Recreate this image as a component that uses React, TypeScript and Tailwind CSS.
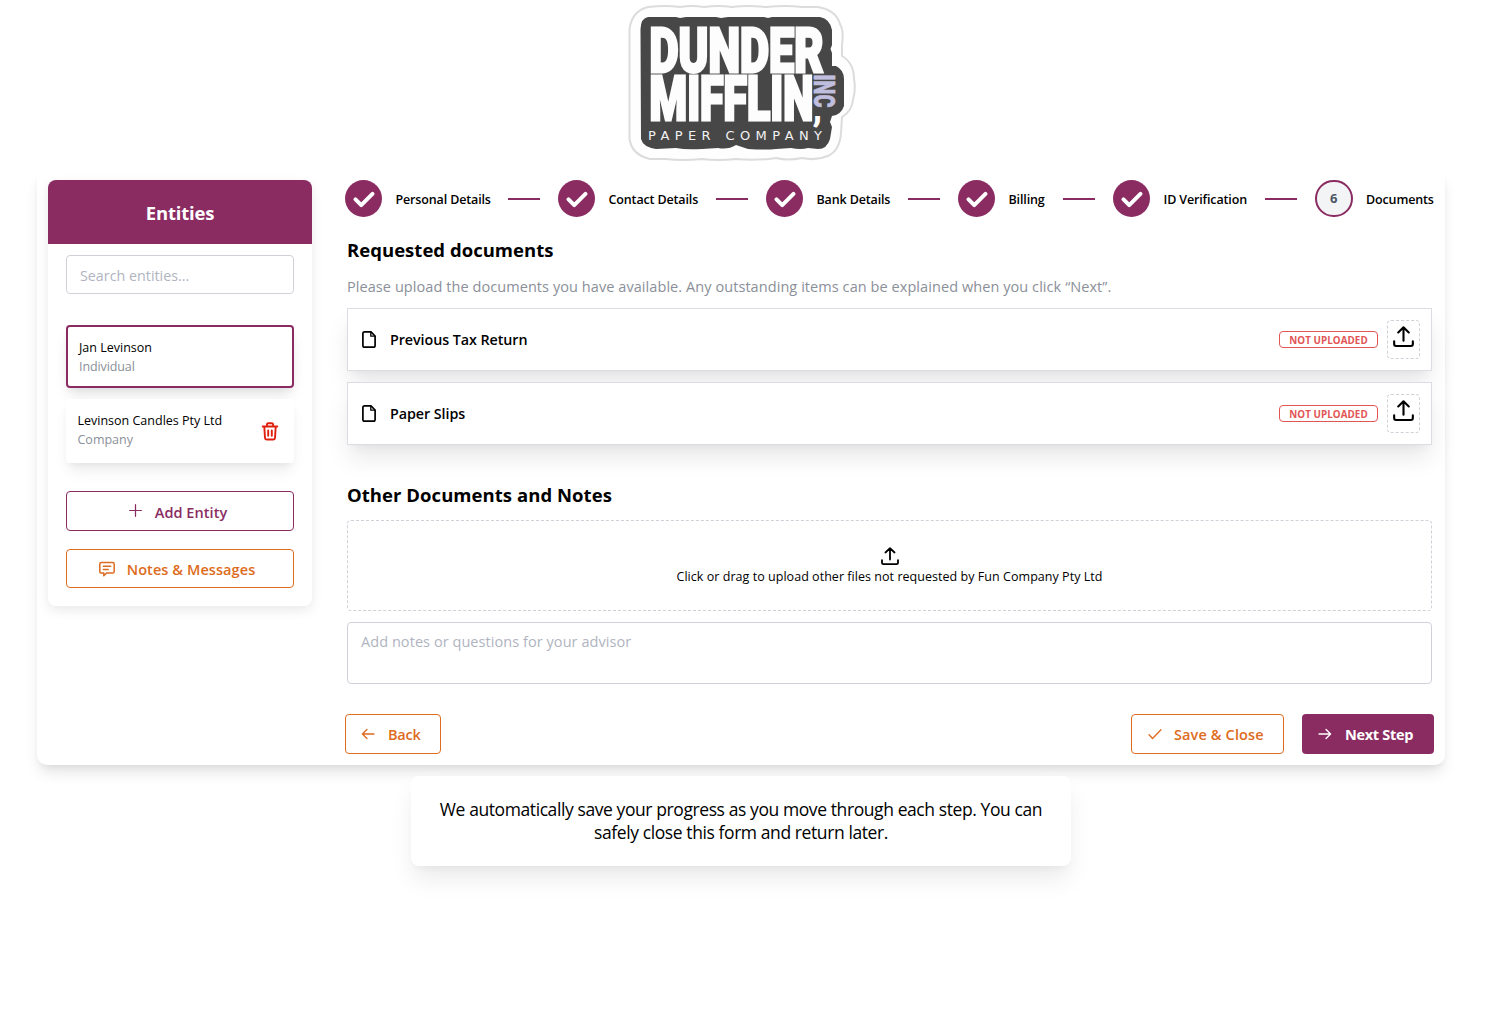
import type { ReactNode } from "react";

function Logo() {
  return (
    <svg width="230" height="158" viewBox="0 0 230 158" className="block overflow-visible" role="img" aria-label="Dunder Mifflin, Inc Paper Company">
      <path
        d="M22 2 Q40 0 54 2 Q66 0 78 2 Q92 0 106 2 Q120 0 140 2 Q160 0 176 2 L192 2 Q210 5 214 19 Q218 26 216 40 L216 51 Q228 58 228 74 Q230 84 227 95 Q226 106 216 112 L215 128 Q214 145 202 151 Q190 156 176 153 Q162 156 150 153 Q130 156 110 154 Q92 156 76 154 Q56 156 40 154 L24 154 Q6 150 3.500 134 L3.500 24 Q6 6 22 2 Z"
        fill="#fefefe"
        stroke="#dcdcdc"
        strokeWidth="2"
      />
      <path
        d="M22 12 L50 12 L54 13 L60 12 L90 12 L95 13 L102 12 L138 12 L142 13 L146 12 L194 12 Q204 14 206 25 L206 40 L204.500 44 L206 48 L206 61 L210 61 Q218 65 218 74 L218 101 Q215 110 206 111 L204 117 L206 122 L204 134 Q201 144 192 144 L182 143 Q175 145 165 143 L150 144 Q140 145 122 144 L110 140 Q102 145 92 143 L76 144 Q60 145 50 143 L30 144 Q17 142 15 134 L14.500 24 Q15 13 22 12 Z"
        fill="#474747"
      />
      <g fill="#fdfdfd" stroke="#fdfdfd" strokeWidth="3" fontFamily="Roboto" fontWeight="900" fontSize="62">
        <text x="23.500" y="66.500" textLength="174" lengthAdjust="spacingAndGlyphs">DUNDER</text>
        <text x="23.500" y="115" textLength="164" lengthAdjust="spacingAndGlyphs">MIFFLIN</text>
      </g>
      <text x="186.500" y="116" fontSize="36" fontFamily="Roboto" fontWeight="900" fill="#fdfdfd">,</text>
      <text transform="translate(187.500 69.500) rotate(90)" fontSize="30" fontFamily="Roboto" fontWeight="900" fill="#c0bedf" stroke="#c0bedf" strokeWidth="0.700" textLength="33" lengthAdjust="spacingAndGlyphs">INC</text>
      <text x="22" y="134.500" fontSize="13" fontFamily="DejaVu Sans" fill="#f2f2f2" textLength="174" lengthAdjust="spacing">PAPER COMPANY</text>
    </svg>
  );
}

function Stroke({ size, width = 1.5, children, className = "" }: { size: number; width?: number; children: ReactNode; className?: string }) {
  return (
    <svg width={size} height={size} viewBox="0 0 20 20" fill="none" stroke="currentColor" strokeWidth={width} strokeLinecap="round" strokeLinejoin="round" className={className} aria-hidden="true">
      {children}
    </svg>
  );
}

function UploadIcon({ size }: { size: number }) {
  return (
    <Stroke size={size} width={2}>
      <path d="M10 14V1.400M5 6.100L10 1.300l5 4.800M1.100 14.500v2.700Q1.100 19 2.900 19h14.200Q18.900 19 18.900 17.200v-2.700" />
    </Stroke>
  );
}

function FileIcon() {
  return (
    <svg width="14" height="17" viewBox="0 0 14 17" fill="none" stroke="currentColor" strokeWidth="1.700" strokeLinejoin="round" aria-hidden="true">
      <path d="M9 .9H2.600Q.9 .9 .9 2.600v11.800q0 1.700 1.700 1.700h8.800q1.700 0 1.700-1.700V5L9 .9Z" />
      <path d="M8.800 1v4.200H13" strokeWidth="1.300" />
    </svg>
  );
}

function TrashIcon() {
  return (
    <svg width="18" height="19" viewBox="0 0 18 19" fill="none" stroke="currentColor" strokeWidth="1.900" strokeLinecap="round" strokeLinejoin="round" aria-hidden="true">
      <path d="M1.700 4.500h14.600M5.900 4.300V2.600Q5.900 1.300 7.200 1.300h3.600q1.300 0 1.300 1.300v1.700M3.300 4.800l.7 11.200q.1 1.500 1.600 1.500h6.800q1.500 0 1.600-1.500l.7-11.200M7.200 8.500v5.200M10.800 8.500v5.200" />
    </svg>
  );
}

const steps = [
  { label: "Personal Details", width: "w-[95.5px]" },
  { label: "Contact Details", width: "w-[90.5px]" },
  { label: "Bank Details", width: "w-[74.5px]" },
  { label: "Billing", width: "w-[37.5px]" },
  { label: "ID Verification", width: "w-[84.5px]" },
  { label: "Documents", width: "w-[68.5px]" },
];

function Stepper() {
  return (
    <ol className="flex h-[37px] items-center">
      {steps.map((step, i) => {
        const last = i === steps.length - 1;
        return (
          <li key={step.label} className="flex shrink-0 items-center">
            {last ? (
              <span className="flex size-[37.5px] items-center justify-center rounded-full border-2 border-[#8a2c62] bg-[#f3f4f6] text-[13px] font-bold text-[#4b5563]">6</span>
            ) : (
              <span className="flex size-[37px] items-center justify-center rounded-full bg-[#8a2c62] text-white">
                <Stroke size={22} width={3.6}>
                  <path d="M2.300 10.300l5.200 5.200L17.700 5.300" />
                </Stroke>
              </span>
            )}
            <span className={`ml-[13.5px] whitespace-nowrap pt-0.5 text-[12.5px] leading-5 font-semibold tracking-[-0.14px] ${step.width}`}>{step.label}</span>
            {!last && <span className="mr-[18px] ml-[17px] h-0.5 w-8 bg-[#8a2c62]" />}
          </li>
        );
      })}
    </ol>
  );
}

function Sidebar() {
  return (
    <aside className="h-[426px] w-[264px] shrink-0 overflow-hidden rounded-lg bg-white shadow-[0_4px_12px_rgba(0,0,0,0.09)]">
      <div className="flex h-16 items-center justify-center bg-[#8a2c62] pt-0.5 text-[18.5px] font-bold tracking-[-0.2px] text-white">Entities</div>
      <div className="flex flex-col px-[18px] pt-[11px]">
        <input
          placeholder="Search entities..."
          className="h-[39px] rounded-[4px] border border-[#d1d1db] px-[13px] pt-0.5 text-[14.3px] outline-none placeholder:text-[#b0b4bf]"
        />
        <div className="mt-[31px] flex h-[63px] flex-col justify-center rounded-[4px] border-2 border-[#8a2c62] pl-[11px] text-[12.5px] leading-[19px] shadow-[0_10px_15px_-3px_rgba(0,0,0,0.1),0_4px_6px_-2px_rgba(0,0,0,0.05)]">
          <span>Jan Levinson</span>
          <span className="tracking-[-0.1px] text-[#8b8f99]">Individual</span>
        </div>
        <div className="mt-[11px] flex h-16 items-center justify-between rounded-[4px] bg-white pr-[15px] pl-[11.5px] shadow-[0_10px_15px_-3px_rgba(0,0,0,0.08),0_4px_6px_-2px_rgba(0,0,0,0.05)]">
          <div className="flex flex-col pb-0.5 text-[12.5px] leading-[19px]">
            <span>Levinson Candles Pty Ltd</span>
            <span className="text-[#8b8f99]">Company</span>
          </div>
          <button aria-label="Delete entity" className="text-[#e0200f]">
            <TrashIcon />
          </button>
        </div>
        <button className="mt-7 flex h-10 items-center justify-center gap-[13px] rounded-[4px] border border-[#8a2c62] pr-1 text-[14.5px] font-semibold text-[#8a2c62]">
          <Stroke size={13} width={1.9} className="-mt-0.5">
            <path d="M10 1v18M1 10h18" />
          </Stroke>
          <span className="pt-[3px] tracking-[0.05px]">Add Entity</span>
        </button>
        <button className="mt-[18px] flex h-[39px] items-center justify-center gap-3 rounded-[4px] border border-[#dd6b20] pr-1.5 text-[14.5px] font-semibold text-[#dd6b20]">
          <Stroke size={16} width={1.9}>
            <path d="M3 2h14q2 0 2 2v9q0 2-2 2H9.500L6 18.500V15H3q-2 0-2-2V4q0-2 2-2ZM5.500 6.500h9M5.500 10.500h6" />
          </Stroke>
          <span className="pt-0.5 tracking-[0.08px]">Notes &amp; Messages</span>
        </button>
      </div>
    </aside>
  );
}

function DocumentRow({ name }: { name: string }) {
  return (
    <div className="flex h-[63px] items-center border border-[#dcdde3] bg-white pr-[11px] pl-3.5 shadow-[0_15px_25px_-2px_rgba(0,0,0,0.09),0_6px_10px_-5px_rgba(0,0,0,0.06)]">
      <FileIcon />
      <span className="ml-3.5 flex-1 text-[14.3px] font-semibold tracking-[-0.06px]">{name}</span>
      <span className="flex h-[17px] w-[99px] items-center justify-center rounded-[4px] border border-[#e25555] pt-[3px] text-[9.8px] font-bold tracking-[0.07px] text-[#e25555]">NOT UPLOADED</span>
      <button aria-label={`Upload ${name}`} className="ml-[9px] flex h-[39px] w-[33px] justify-center rounded-[4px] border border-dashed border-[#cfd0d8] pt-[5px] pr-px">
        <UploadIcon size={21} />
      </button>
    </div>
  );
}

export default function App() {
  return (
    <div className="h-[1020px] w-[1482px] bg-white px-[37px] pt-[5px] font-['Open_Sans',sans-serif] text-black">
      <header className="flex h-[164px] justify-center">
        <Logo />
      </header>

      <section className="flex h-[596px] rounded-[10px] bg-white p-[11px] shadow-[0_10px_15px_-3px_rgba(0,0,0,0.11),0_4px_6px_-2px_rgba(0,0,0,0.06)]">
        <Sidebar />
        <main className="ml-[33px] w-[1089px]">
          <Stepper />
          <div className="mx-0.5">
            <h2 className="mt-5 text-[18.5px] leading-[26px] font-bold tracking-[0.03px]">Requested documents</h2>
            <p className="mt-3.5 mb-[11px] text-[14.5px] leading-5 tracking-[0.07px] text-[#8b8f99]">
              Please upload the documents you have available. Any outstanding items can be explained when you click “Next”.
            </p>
            <div className="flex flex-col gap-[11px]">
              <DocumentRow name="Previous Tax Return" />
              <DocumentRow name="Paper Slips" />
            </div>
            <h2 className="mt-[37px] mb-3 text-[18.5px] leading-[26px] font-bold tracking-[0.05px]">Other Documents and Notes</h2>
            <div className="flex h-[91px] flex-col items-center rounded-[4px] border border-dashed border-[#cfd0d8] pt-[26px]">
              <UploadIcon size={18} />
              <span className="mt-0.5 text-[12.5px] leading-[19px] tracking-[0.04px]">Click or drag to upload other files not requested by Fun Company Pty Ltd</span>
            </div>
            <textarea
              placeholder="Add notes or questions for your advisor"
              className="mt-[11px] block h-[62px] w-full resize-none rounded-[4px] border border-[#d1d1db] px-[13px] py-2 text-[14.5px] leading-[22px] tracking-[0.06px] outline-none placeholder:text-[#b0b4bf]"
            />
          </div>
          <div className="mt-[30px] flex h-10 gap-[18px] text-[14.5px] font-semibold">
            <button className="mr-auto flex w-24 items-center gap-[13px] rounded-[4px] border border-[#dd6b20] pl-[15px] text-[#dd6b20]">
              <Stroke size={14} width={1.9}>
                <path d="M18.500 10H2M8.500 3.500L2 10l6.500 6.500" />
              </Stroke>
              <span className="pt-0.5 tracking-[-0.25px]">Back</span>
            </button>
            <button className="flex w-[153px] items-center gap-3 rounded-[4px] border border-[#dd6b20] pl-4 text-[#dd6b20]">
              <Stroke size={14} width={1.9}>
                <path d="M1.500 11l5 5.500L18.500 4" />
              </Stroke>
              <span className="pt-0.5 tracking-[0.12px]">Save &amp; Close</span>
            </button>
            <button className="flex w-[132px] items-center gap-[13px] rounded-[4px] bg-[#8a2c62] pl-4 font-bold text-white">
              <Stroke size={14} width={1.9}>
                <path d="M1.500 10H18M11.500 3.500L18 10l-6.500 6.500" />
              </Stroke>
              <span className="pt-0.5 tracking-[-0.3px]">Next Step</span>
            </button>
          </div>
        </main>
      </section>

      <div className="mx-auto mt-[11px] flex h-[90px] w-[660px] items-center justify-center rounded-lg bg-white text-center text-[17.5px] leading-[23px] tracking-[-0.41px] shadow-[0_15px_25px_-2px_rgba(0,0,0,0.08),0_6px_10px_-5px_rgba(0,0,0,0.06)]">
        <p>
          We automatically save your progress as you move through each step. You can
          <br />
          safely close this form and return later.
        </p>
      </div>
    </div>
  );
}
